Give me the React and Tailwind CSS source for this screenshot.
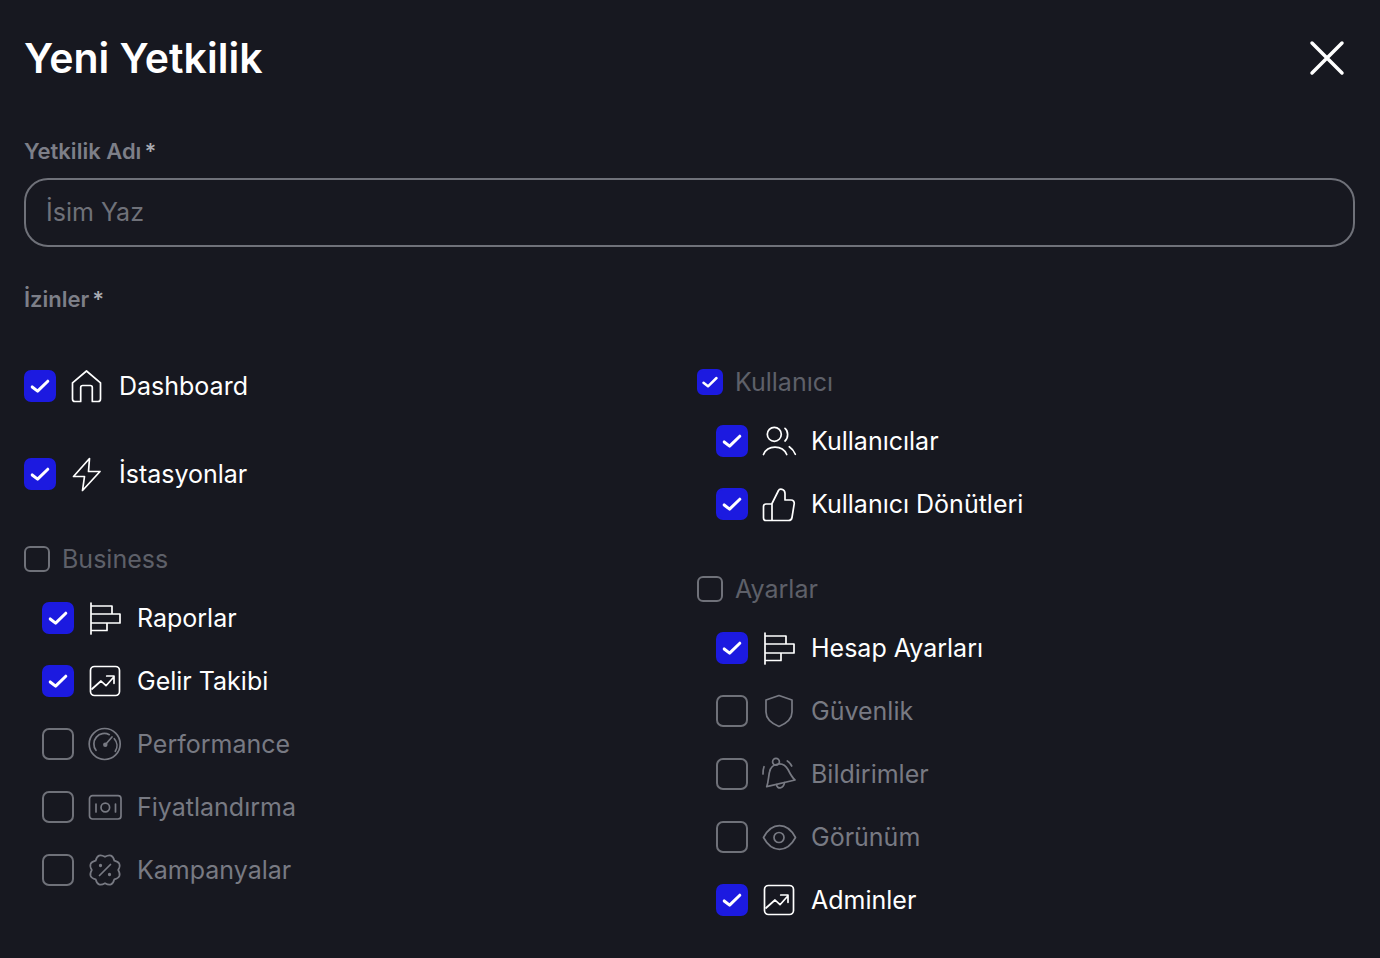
import React from "react";

const S = { fill: "none", stroke: "currentColor", strokeWidth: 1.7, strokeLinecap: "round", strokeLinejoin: "round" };
const I = ({ children }) => (
  <svg viewBox="0 0 32 32" className="w-8 h-8 shrink-0 overflow-visible" {...S}>{children}</svg>
);

const scallop = (() => {
  let d = "";
  for (let k = 0; k < 8; k++) {
    const a = (k * Math.PI) / 4;
    const b = ((k + 0.5) * Math.PI) / 4;
    const c = ((k + 1) * Math.PI) / 4;
    const p = (r, t) => `${(16 + r * Math.sin(t)).toFixed(2)} ${(16 - r * Math.cos(t)).toFixed(2)}`;
    if (k === 0) d += `M${p(13.2, a)}`;
    d += `Q${p(19, b)} ${p(13.2, c)}`;
  }
  return d + "Z";
})();

const Home = () => <I><path d="M15.500 1 1.500 12.800V29a2.500 2.500 0 0 0 2.500 2.500H9.700V17.500a2 2 0 0 1 2-2H19.300a2 2 0 0 1 2 2V31.500H27a2.500 2.500 0 0 0 2.500-2.500V12.800Z" /></I>;
const Bolt = () => <I><path d="M18.500 .5 2.500 18.500H13.500L11.500 32.500 29 13.500H17.500Z" /></I>;
const Bars = () => <I><path d="M2 1V32M2 4H23V12M2 12H31V21H2M2 21H18V28.500H2" /></I>;
const Trend = () => <I><rect x="1.500" y="1.500" width="29" height="29" rx="4" /><path d="M3 24 12 16 17 20.700 25 11.700M17.700 11H25V18.300" /></I>;
const Gauge = () => <I><circle cx="15.700" cy="16" r="15.500" /><path d="M7 22.300A10.500 10.500 0 0 1 20.300 6.700M25.300 10.700A10.500 10.500 0 0 1 26.300 23.300" /><path d="M16.300 16.700 23 9" /><circle cx="16.300" cy="16.700" r="1.400" fill="currentColor" /></I>;
const Money = () => <I><rect x=".5" y="4.700" width="31.500" height="23.300" rx="3" /><circle cx="16.300" cy="16.500" r="4.300" /><path d="M7 13V21M26.500 13V21" /></I>;
const Promo = () => <I><path d={scallop} /><path d="M10.500 21.500 21.500 10.500" /><circle cx="11.500" cy="11.500" r=".8" fill="currentColor" /><circle cx="20.500" cy="20.500" r=".8" fill="currentColor" /></I>;
const Users = () => <I><circle cx="11.300" cy="9.300" r="7" /><path d="M.5 29.500C4.500 19.700 19.500 19.700 23.700 29.500M22 3.300C25.500 6 25.500 13 22 16M26.300 21.700C29 23.500 31 26 32.300 29.300" /></I>;
const Thumb = () => <I><path d="M9 32.500V15.500L15.500 2.500C16 1.300 17.500 1 19 1.300C21 1.800 22 3.500 22 5.500V12H28C30.200 12 31.500 13.700 31.200 15.800L29 29.500C28.700 31.300 27.500 32.500 25.500 32.500H9M9 16H3C1.500 16 .5 17 .5 18.500V30C.5 31.500 1.500 32.500 3 32.500H9" /></I>;
const Shield = () => <I><path d="M16 .5 29 5V17C29 24 22 29 16 31.500 10 29 3 24 3 17V5Z" /></I>;
const Bell = () => <I><circle cx="13" cy="3.700" r="3.400" /><path d="M3.700 28.700C5.500 24 5.500 18 6.500 14 7.500 9 11.500 6.500 15 6 19.500 5.300 23 8 25 11.500 27 15.500 29 19.500 32 22Z" /><path d="M13.500 26.500C14 31.500 20.500 31 21.500 24.700M1 8.700C.3 10.500 0 13 0 16M24.300 3C26 4 27.500 5.800 28.700 8" /></I>;
const Eye = () => <I><path d="M.5 16.500C4.500 9 10 4.700 16.500 4.700 23 4.700 28.500 9 32.500 16.500 28.500 24 23 28.300 16.500 28.300 10 28.300 4.500 24 .5 16.500Z" /><circle cx="16" cy="16.500" r="5" /></I>;

const Check = ({ on, small }) => (
  <span
    className={`shrink-0 flex items-center justify-center border-2 ${small ? "w-[26px] h-[26px] rounded-[6px]" : "w-8 h-8 rounded-[7px]"} ${on ? "bg-[#1c1ae0] border-[#1c1ae0]" : "border-[#6f7179]"}`}
  >
    {on && (
      <svg viewBox="0 0 20 20" className={small ? "w-5 h-5 shrink-0" : "w-6 h-6 shrink-0"} fill="none" stroke="#fff" strokeWidth="2.500" strokeLinecap="round" strokeLinejoin="round">
        <path d="M3.500 10.800 8 14.300 16.500 6" />
      </svg>
    )}
  </span>
);

const Row = ({ on, icon, label, className = "" }) => (
  <div className={`flex items-center h-8 ${className}`}>
    <Check on={on} />
    <span className={`ml-[15px] ${on ? "text-white" : "text-[#787a83]"}`}>{icon}</span>
    <span className={`ml-4 text-[25px] leading-8 ${on ? "text-white" : "text-[#787a83]"}`}>{label}</span>
  </div>
);

const Group = ({ on, label, className = "" }) => (
  <div className={`flex items-center gap-3 h-[26px] ${className}`}>
    <Check on={on} small />
    <span className="text-[25px] leading-8 text-[#5e6069]">{label}</span>
  </div>
);

const Label = ({ children, className = "" }) => (
  <div className={`text-[22px] leading-7 font-semibold text-[#7d7f88] ${className}`}>
    {children}<span className="ml-[3px] text-[#a9abb2]">*</span>
  </div>
);

export default function App() {
  return (
    <div className="w-full h-[958px] overflow-hidden bg-[#171820] pl-6 pr-6 font-['Inter',sans-serif]">
      <div className="flex items-center justify-between pt-[33px] h-[83px] pr-[11px]">
        <h1 className="text-[41px] leading-[50px] font-semibold text-white">Yeni Yetkilik</h1>
        <svg viewBox="0 0 36 36" className="w-9 h-9" fill="none" stroke="#fff" strokeWidth="3.500" strokeLinecap="round">
          <path d="M3 3 33 33M33 3 3 33" />
        </svg>
      </div>

      <Label className="mt-[54px]">Yetkilik Adı</Label>
      <div className="mt-[13px] h-[69px] w-[1331px] rounded-[24px] border-2 border-[#6f7179] flex items-center px-5 pt-px text-[25px] text-[#6f7179]">İsim Yaz</div>
      <Label className="mt-[38px]">İzinler</Label>

      <div className="flex mt-[43px]">
        <div className="w-[673px]">
          <div className="pt-[14px]" />
          <Row on icon={<Home />} label="Dashboard" />
          <Row on icon={<Bolt />} label="İstasyonlar" className="mt-14" />
          <Group label="Business" className="mt-[56px]" />
          <div className="ml-[18px] mt-[30px] flex flex-col gap-[31px]">
            <Row on icon={<Bars />} label="Raporlar" />
            <Row on icon={<Trend />} label="Gelir Takibi" />
            <Row icon={<Gauge />} label="Performance" />
            <Row icon={<Money />} label="Fiyatlandırma" />
            <Row icon={<Promo />} label="Kampanyalar" />
          </div>
        </div>
        <div className="flex-1">
          <Group on label="Kullanıcı" className="mt-[13px]" />
          <div className="ml-[19px] mt-[30px] flex flex-col gap-[31px]">
            <Row on icon={<Users />} label="Kullanıcılar" />
            <Row on icon={<Thumb />} label="Kullanıcı Dönütleri" />
          </div>
          <Group label="Ayarlar" className="mt-[56px]" />
          <div className="ml-[19px] mt-[30px] flex flex-col gap-[31px]">
            <Row on icon={<Bars />} label="Hesap Ayarları" />
            <Row icon={<Shield />} label="Güvenlik" />
            <Row icon={<Bell />} label="Bildirimler" />
            <Row icon={<Eye />} label="Görünüm" />
            <Row on icon={<Trend />} label="Adminler" />
          </div>
        </div>
      </div>
    </div>
  );
}
